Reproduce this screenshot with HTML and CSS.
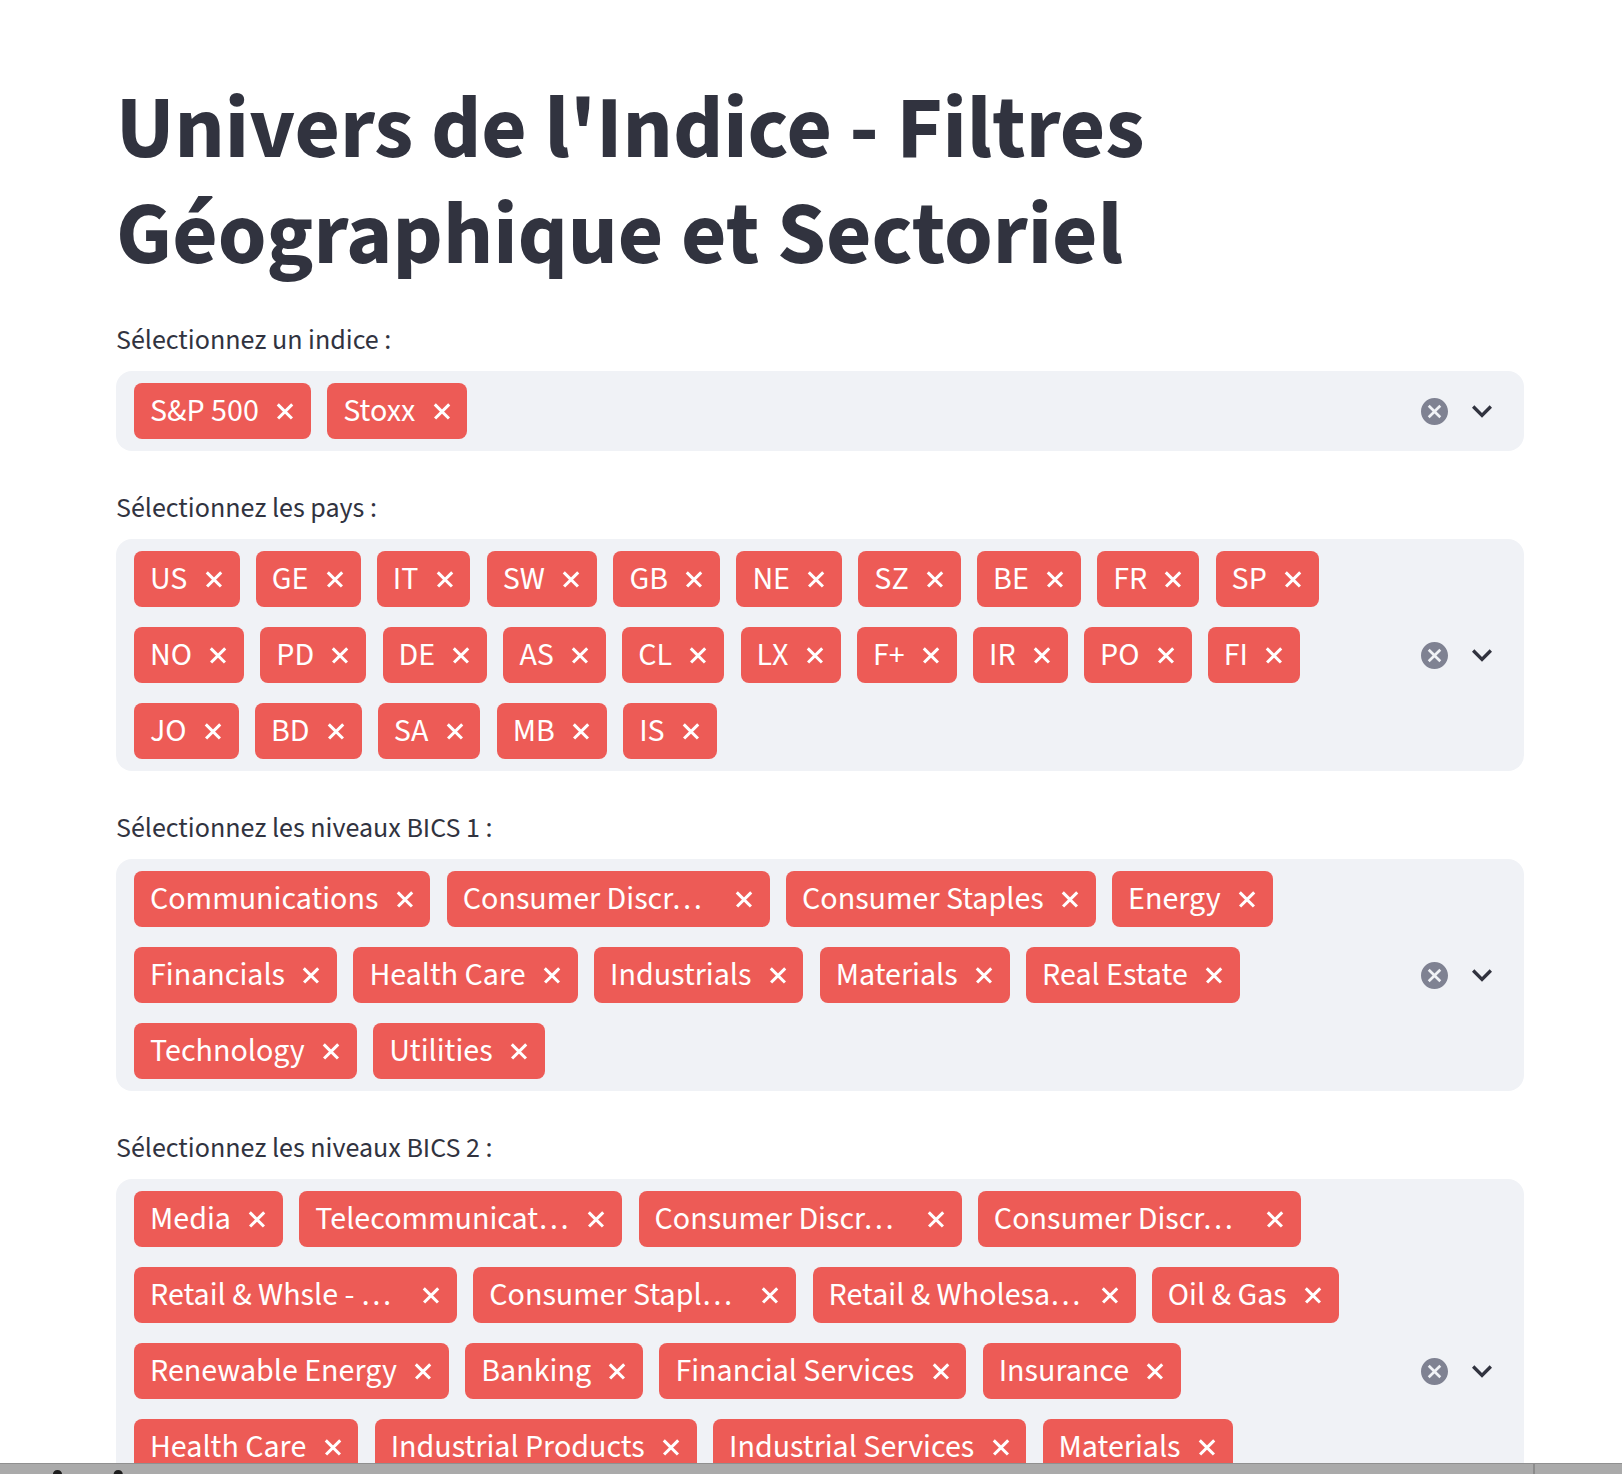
FILE: index.html
```html
<!DOCTYPE html>
<html lang="fr">
<head>
<meta charset="utf-8">
<title>Univers de l'Indice</title>
<link rel="stylesheet" href="styles.css">
</head>
<body>
<div class="app">
  <main class="main">
    <h1 class="title">Univers de l'Indice - Filtres Géographique et Sectoriel</h1>

    <div class="field">
      <label class="field-label">Sélectionnez un indice :</label>
      <div class="select">
        <div class="tags">
          <span class="tag"><span class="tag-text">S&amp;P 500</span><span class="tag-x"></span></span>
          <span class="tag"><span class="tag-text">Stoxx</span><span class="tag-x"></span></span>
        </div>
        <div class="indicators">
          <svg class="clear" viewBox="2 2 20 20" width="27" height="27"><path d="M12 2C6.47 2 2 6.47 2 12s4.47 10 10 10 10-4.47 10-10S17.53 2 12 2zm5 13.59L15.59 17 12 13.41 8.41 17 7 15.59 10.59 12 7 8.41 8.41 7 12 10.59 15.59 7 17 8.41 13.41 12 17 15.59z"/></svg>
          <svg class="chevron" viewBox="6 6 12 12" width="20" height="20"><path d="M16.59 8.59L12 13.17 7.41 8.59 6 10l6 6 6-6z"/></svg>
        </div>
      </div>
    </div>

    <div class="field">
      <label class="field-label">Sélectionnez les pays :</label>
      <div class="select">
        <div class="tags">
          <span class="tag"><span class="tag-text">US</span><span class="tag-x"></span></span>
          <span class="tag"><span class="tag-text">GE</span><span class="tag-x"></span></span>
          <span class="tag"><span class="tag-text">IT</span><span class="tag-x"></span></span>
          <span class="tag"><span class="tag-text">SW</span><span class="tag-x"></span></span>
          <span class="tag"><span class="tag-text">GB</span><span class="tag-x"></span></span>
          <span class="tag"><span class="tag-text">NE</span><span class="tag-x"></span></span>
          <span class="tag"><span class="tag-text">SZ</span><span class="tag-x"></span></span>
          <span class="tag"><span class="tag-text">BE</span><span class="tag-x"></span></span>
          <span class="tag"><span class="tag-text">FR</span><span class="tag-x"></span></span>
          <span class="tag"><span class="tag-text">SP</span><span class="tag-x"></span></span>
          <span class="tag"><span class="tag-text">NO</span><span class="tag-x"></span></span>
          <span class="tag"><span class="tag-text">PD</span><span class="tag-x"></span></span>
          <span class="tag"><span class="tag-text">DE</span><span class="tag-x"></span></span>
          <span class="tag"><span class="tag-text">AS</span><span class="tag-x"></span></span>
          <span class="tag"><span class="tag-text">CL</span><span class="tag-x"></span></span>
          <span class="tag"><span class="tag-text">LX</span><span class="tag-x"></span></span>
          <span class="tag"><span class="tag-text">F+</span><span class="tag-x"></span></span>
          <span class="tag"><span class="tag-text">IR</span><span class="tag-x"></span></span>
          <span class="tag"><span class="tag-text">PO</span><span class="tag-x"></span></span>
          <span class="tag"><span class="tag-text">FI</span><span class="tag-x"></span></span>
          <span class="tag"><span class="tag-text">JO</span><span class="tag-x"></span></span>
          <span class="tag"><span class="tag-text">BD</span><span class="tag-x"></span></span>
          <span class="tag"><span class="tag-text">SA</span><span class="tag-x"></span></span>
          <span class="tag"><span class="tag-text">MB</span><span class="tag-x"></span></span>
          <span class="tag"><span class="tag-text">IS</span><span class="tag-x"></span></span>
        </div>
        <div class="indicators">
          <svg class="clear" viewBox="2 2 20 20" width="27" height="27"><path d="M12 2C6.47 2 2 6.47 2 12s4.47 10 10 10 10-4.47 10-10S17.53 2 12 2zm5 13.59L15.59 17 12 13.41 8.41 17 7 15.59 10.59 12 7 8.41 8.41 7 12 10.59 15.59 7 17 8.41 13.41 12 17 15.59z"/></svg>
          <svg class="chevron" viewBox="6 6 12 12" width="20" height="20"><path d="M16.59 8.59L12 13.17 7.41 8.59 6 10l6 6 6-6z"/></svg>
        </div>
      </div>
    </div>

    <div class="field">
      <label class="field-label">Sélectionnez les niveaux BICS 1 :</label>
      <div class="select">
        <div class="tags">
          <span class="tag"><span class="tag-text">Communications</span><span class="tag-x"></span></span>
          <span class="tag" title="Consumer Discretionary"><span class="tag-text trunc">Consumer Discr…</span><span class="tag-x"></span></span>
          <span class="tag"><span class="tag-text">Consumer Staples</span><span class="tag-x"></span></span>
          <span class="tag"><span class="tag-text">Energy</span><span class="tag-x"></span></span>
          <span class="tag"><span class="tag-text">Financials</span><span class="tag-x"></span></span>
          <span class="tag"><span class="tag-text">Health Care</span><span class="tag-x"></span></span>
          <span class="tag"><span class="tag-text">Industrials</span><span class="tag-x"></span></span>
          <span class="tag"><span class="tag-text">Materials</span><span class="tag-x"></span></span>
          <span class="tag"><span class="tag-text">Real Estate</span><span class="tag-x"></span></span>
          <span class="tag"><span class="tag-text">Technology</span><span class="tag-x"></span></span>
          <span class="tag"><span class="tag-text">Utilities</span><span class="tag-x"></span></span>
        </div>
        <div class="indicators">
          <svg class="clear" viewBox="2 2 20 20" width="27" height="27"><path d="M12 2C6.47 2 2 6.47 2 12s4.47 10 10 10 10-4.47 10-10S17.53 2 12 2zm5 13.59L15.59 17 12 13.41 8.41 17 7 15.59 10.59 12 7 8.41 8.41 7 12 10.59 15.59 7 17 8.41 13.41 12 17 15.59z"/></svg>
          <svg class="chevron" viewBox="6 6 12 12" width="20" height="20"><path d="M16.59 8.59L12 13.17 7.41 8.59 6 10l6 6 6-6z"/></svg>
        </div>
      </div>
    </div>

    <div class="field">
      <label class="field-label">Sélectionnez les niveaux BICS 2 :</label>
      <div class="select">
        <div class="tags">
          <span class="tag"><span class="tag-text">Media</span><span class="tag-x"></span></span>
          <span class="tag" title="Telecommunications"><span class="tag-text trunc">Telecommunicat…</span><span class="tag-x"></span></span>
          <span class="tag" title="Consumer Discretionary Products"><span class="tag-text trunc">Consumer Discr…</span><span class="tag-x"></span></span>
          <span class="tag" title="Consumer Discretionary Services"><span class="tag-text trunc">Consumer Discr…</span><span class="tag-x"></span></span>
          <span class="tag" title="Retail &amp; Whsle - Discretionary"><span class="tag-text trunc">Retail &amp; Whsle - …</span><span class="tag-x"></span></span>
          <span class="tag" title="Consumer Staple Products"><span class="tag-text trunc">Consumer Stapl…</span><span class="tag-x"></span></span>
          <span class="tag" title="Retail &amp; Wholesale - Staples"><span class="tag-text trunc">Retail &amp; Wholesa…</span><span class="tag-x"></span></span>
          <span class="tag"><span class="tag-text">Oil &amp; Gas</span><span class="tag-x"></span></span>
          <span class="tag"><span class="tag-text">Renewable Energy</span><span class="tag-x"></span></span>
          <span class="tag"><span class="tag-text">Banking</span><span class="tag-x"></span></span>
          <span class="tag"><span class="tag-text">Financial Services</span><span class="tag-x"></span></span>
          <span class="tag"><span class="tag-text">Insurance</span><span class="tag-x"></span></span>
          <span class="tag"><span class="tag-text">Health Care</span><span class="tag-x"></span></span>
          <span class="tag"><span class="tag-text">Industrial Products</span><span class="tag-x"></span></span>
          <span class="tag"><span class="tag-text">Industrial Services</span><span class="tag-x"></span></span>
          <span class="tag"><span class="tag-text">Materials</span><span class="tag-x"></span></span>
          <span class="tag"><span class="tag-text">Real Estate</span><span class="tag-x"></span></span>
          <span class="tag" title="Software &amp; Tech Services"><span class="tag-text trunc">Software &amp; Tech …</span><span class="tag-x"></span></span>
          <span class="tag" title="Tech Hardware &amp; Semiconductors"><span class="tag-text trunc">Tech Hardware &amp;…</span><span class="tag-x"></span></span>
          <span class="tag"><span class="tag-text">Utilities</span><span class="tag-x"></span></span>
        </div>
        <div class="indicators">
          <svg class="clear" viewBox="2 2 20 20" width="27" height="27"><path d="M12 2C6.47 2 2 6.47 2 12s4.47 10 10 10 10-4.47 10-10S17.53 2 12 2zm5 13.59L15.59 17 12 13.41 8.41 17 7 15.59 10.59 12 7 8.41 8.41 7 12 10.59 15.59 7 17 8.41 13.41 12 17 15.59z"/></svg>
          <svg class="chevron" viewBox="6 6 12 12" width="20" height="20"><path d="M16.59 8.59L12 13.17 7.41 8.59 6 10l6 6 6-6z"/></svg>
        </div>
      </div>
    </div>
  </main>

  <div class="bottom-bar">
    <span class="bottom-heading">Statistiques</span>
    <span class="bottom-divider"></span>
  </div>
</div>
</body>
</html>
```
FILE: styles.css
```css
html, body {
  margin: 0;
  padding: 0;
  background: #ffffff;
}

body {
  font-family: "Source Sans 3", "Source Sans Pro", Lato, "Liberation Sans", sans-serif;
  color: #31333f;
}

.app {
  height: 100vh;
  overflow: hidden;
}

.main {
  display: flex;
  flex-direction: column;
  gap: 35px;
  padding: 77px 98px 0 116px;
}

.title {
  margin: 0 0 -5px 0;
  font-size: 88px;
  line-height: 105.6px;
  font-weight: 700;
  color: #31333f;
}

.field {
  display: flex;
  flex-direction: column;
}

.field-label {
  display: block;
  font-size: 28px;
  line-height: 44px;
  margin-bottom: 9px;
  color: #31333f;
}

.select {
  display: flex;
  background: #f0f2f6;
  border-radius: 16px;
}

.tags {
  flex: 1;
  display: flex;
  flex-wrap: wrap;
  align-content: flex-start;
  gap: 20px 16.3px;
  padding: 12px 0 12px 18px;
}

.tag {
  display: inline-flex;
  align-items: center;
  height: 56px;
  padding: 0 16.8px 0 16px;
  background: #ed5b56;
  color: #ffffff;
  border-radius: 8px;
  font-size: 32px;
  white-space: nowrap;
}

.tag-text {
  line-height: 46px;
  white-space: nowrap;
}

.tag-text.trunc {
  width: 254.9px;
}

.tag-x {
  position: relative;
  flex: none;
  width: 18px;
  height: 18px;
  margin-left: 17.3px;
}

.tag-x::before,
.tag-x::after {
  content: "";
  position: absolute;
  left: -1px;
  top: 7.7px;
  width: 20px;
  height: 2.6px;
  background: #ffffff;
  transform: rotate(45deg);
}

.tag-x::after {
  transform: rotate(-45deg);
}

.indicators {
  flex: none;
  display: flex;
  align-items: center;
  gap: 24px;
  padding: 0 32px 0 20px;
}

.clear {
  display: block;
  fill: #7f8292;
}

.chevron {
  display: block;
  fill: #31333f;
}

.bottom-bar {
  position: fixed;
  left: 0;
  right: 0;
  bottom: 0;
  height: 10px;
  background: #aaaaaa;
  border-top: 1px solid #909090;
  overflow: hidden;
}

.bottom-heading {
  position: absolute;
  left: -50px;
  top: 2px;
  font-size: 56px;
  line-height: 56px;
  font-weight: 700;
  color: #1e1e1e;
  white-space: nowrap;
}

.bottom-divider {
  position: absolute;
  left: 1533px;
  top: 0;
  width: 2px;
  height: 100%;
  background: #8c8c8c;
}
```
